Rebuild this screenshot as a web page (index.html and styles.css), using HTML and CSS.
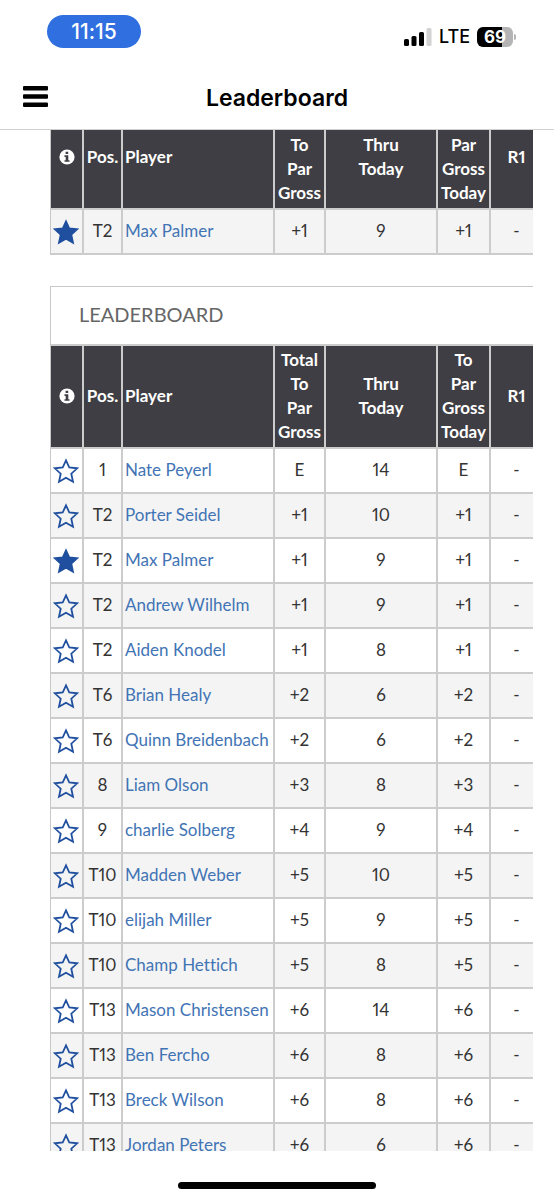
FILE: index.html
```html
<!DOCTYPE html>
<html lang="en">
<head>
	<meta charset="UTF-8">
	<meta name="viewport" content="width=device-width,initial-scale=1">
	<title>Leaderboard</title>
	<link rel="stylesheet" href="styles.css">
</head>
<body>
	<svg class="defs" width="0" height="0">
		<symbol id="star" viewBox="0 0 26 26">
			<path d="M13 2.300 16.300 9.500 24.200 10.300 18.300 15.700 20 23.700 13 19.700 6 23.700 7.700 15.700 1.800 10.300 9.700 9.500Z" stroke="#1f4f9e" stroke-width="1.8"/>
		</symbol>
		<symbol id="info" viewBox="0 0 16 16">
			<circle cx="8" cy="8" r="7.6" fill="#fff"/>
			<path d="M6.6 2.7h2.6v2.4H6.6zM5.5 6.3h3.8v4.9h1.2v1.6h-5v-1.6h1.2V7.9H5.500z" fill="#3f3e44"/>
		</symbol>
	</svg>
	<div class="status">
		<span class="time">11:15</span>
		<div class="signal">
			<svg width="28" height="18" viewBox="0 0 28 18">
				<rect x="0" y="11" width="5" height="7" rx="1.5"/>
				<rect x="7.500" y="8" width="5" height="10" rx="1.5"/>
				<rect x="15" y="4" width="5" height="14" rx="1.5"/>
				<rect x="22.500" y="0" width="5" height="18" rx="1.5" fill="#d2d2d2"/>
			</svg>
			<span class="network">LTE</span>
			<span class="battery">69</span>
		</div>
	</div>
	<header class="appbar">
		<button class="menu" aria-label="Menu">
			<svg width="25" height="21" viewBox="0 0 25 21">
				<rect width="25" height="4.500" rx="1"/>
				<rect y="8.200" width="25" height="4.500" rx="1"/>
				<rect y="16.400" width="25" height="4.500" rx="1"/>
			</svg>
		</button>
		<h1>Leaderboard</h1>
	</header>
	<main class="content">
		<table class="board favorites">
			<colgroup><col class="c-star"><col class="c-pos"><col><col class="c-total"><col class="c-thru"><col class="c-today"><col class="c-round"></colgroup>
			<thead>
				<tr><th><svg class="info"><use href="#info"/></svg></th><th>Pos.</th><th class="player">Player</th><th>Total<br>To<br>Par<br>Gross</th><th>Thru<br>Today</th><th>To<br>Par<br>Gross<br>Today</th><th>R1</th></tr>
			</thead>
			<tbody>
				<tr class="alt"><td><button class="star on" aria-label="Favorite"><svg><use href="#star"/></svg></button></td><td>T2</td><td class="player"><a href="#">Max Palmer</a></td><td>+1</td><td>9</td><td>+1</td><td>-</td></tr>
			</tbody>
		</table>

		<table class="board">
			<colgroup><col class="c-star"><col class="c-pos"><col><col class="c-total"><col class="c-thru"><col class="c-today"><col class="c-round"></colgroup>
			<thead>
				<tr><td class="heading" colspan="7">LEADERBOARD</td></tr>
				<tr><th><svg class="info"><use href="#info"/></svg></th><th>Pos.</th><th class="player">Player</th><th>Total<br>To<br>Par<br>Gross</th><th>Thru<br>Today</th><th>To<br>Par<br>Gross<br>Today</th><th>R1</th></tr>
			</thead>
			<tbody>
				<tr><td><button class="star" aria-label="Favorite"><svg><use href="#star"/></svg></button></td><td>1</td><td class="player"><a href="#">Nate Peyerl</a></td><td>E</td><td>14</td><td>E</td><td>-</td></tr>
				<tr class="alt"><td><button class="star" aria-label="Favorite"><svg><use href="#star"/></svg></button></td><td>T2</td><td class="player"><a href="#">Porter Seidel</a></td><td>+1</td><td>10</td><td>+1</td><td>-</td></tr>
				<tr><td><button class="star on" aria-label="Favorite"><svg><use href="#star"/></svg></button></td><td>T2</td><td class="player"><a href="#">Max Palmer</a></td><td>+1</td><td>9</td><td>+1</td><td>-</td></tr>
				<tr class="alt"><td><button class="star" aria-label="Favorite"><svg><use href="#star"/></svg></button></td><td>T2</td><td class="player"><a href="#">Andrew Wilhelm</a></td><td>+1</td><td>9</td><td>+1</td><td>-</td></tr>
				<tr><td><button class="star" aria-label="Favorite"><svg><use href="#star"/></svg></button></td><td>T2</td><td class="player"><a href="#">Aiden Knodel</a></td><td>+1</td><td>8</td><td>+1</td><td>-</td></tr>
				<tr class="alt"><td><button class="star" aria-label="Favorite"><svg><use href="#star"/></svg></button></td><td>T6</td><td class="player"><a href="#">Brian Healy</a></td><td>+2</td><td>6</td><td>+2</td><td>-</td></tr>
				<tr><td><button class="star" aria-label="Favorite"><svg><use href="#star"/></svg></button></td><td>T6</td><td class="player"><a href="#">Quinn Breidenbach</a></td><td>+2</td><td>6</td><td>+2</td><td>-</td></tr>
				<tr class="alt"><td><button class="star" aria-label="Favorite"><svg><use href="#star"/></svg></button></td><td>8</td><td class="player"><a href="#">Liam Olson</a></td><td>+3</td><td>8</td><td>+3</td><td>-</td></tr>
				<tr><td><button class="star" aria-label="Favorite"><svg><use href="#star"/></svg></button></td><td>9</td><td class="player"><a href="#">charlie Solberg</a></td><td>+4</td><td>9</td><td>+4</td><td>-</td></tr>
				<tr class="alt"><td><button class="star" aria-label="Favorite"><svg><use href="#star"/></svg></button></td><td>T10</td><td class="player"><a href="#">Madden Weber</a></td><td>+5</td><td>10</td><td>+5</td><td>-</td></tr>
				<tr><td><button class="star" aria-label="Favorite"><svg><use href="#star"/></svg></button></td><td>T10</td><td class="player"><a href="#">elijah Miller</a></td><td>+5</td><td>9</td><td>+5</td><td>-</td></tr>
				<tr class="alt"><td><button class="star" aria-label="Favorite"><svg><use href="#star"/></svg></button></td><td>T10</td><td class="player"><a href="#">Champ Hettich</a></td><td>+5</td><td>8</td><td>+5</td><td>-</td></tr>
				<tr><td><button class="star" aria-label="Favorite"><svg><use href="#star"/></svg></button></td><td>T13</td><td class="player"><a href="#">Mason Christensen</a></td><td>+6</td><td>14</td><td>+6</td><td>-</td></tr>
				<tr class="alt"><td><button class="star" aria-label="Favorite"><svg><use href="#star"/></svg></button></td><td>T13</td><td class="player"><a href="#">Ben Fercho</a></td><td>+6</td><td>8</td><td>+6</td><td>-</td></tr>
				<tr><td><button class="star" aria-label="Favorite"><svg><use href="#star"/></svg></button></td><td>T13</td><td class="player"><a href="#">Breck Wilson</a></td><td>+6</td><td>8</td><td>+6</td><td>-</td></tr>
				<tr class="alt"><td><button class="star" aria-label="Favorite"><svg><use href="#star"/></svg></button></td><td>T13</td><td class="player"><a href="#">Jordan Peters</a></td><td>+6</td><td>6</td><td>+6</td><td>-</td></tr>
			</tbody>
		</table>
	</main>
	<footer class="home"><div class="home-bar"></div></footer>
</body>
</html>
```

FILE: styles.css
```css
*{
	box-sizing: border-box;
}
body{
	margin: 0;
	height: 100vh;
	display: flex;
	flex-direction: column;
	overflow: hidden;
	background: #fff;
	color: #333;
	font-family: Lato, "Liberation Sans", sans-serif;
	font-variant-ligatures: none;
}
button{
	padding: 0;
	border: 0;
	background: none;
}
.defs{
	position: absolute;
}

/* status bar */
.status{
	display: flex;
	justify-content: space-between;
	align-items: flex-start;
	height: 67px;
	padding: 15px 41px 0 47px;
	font-family: Inter, sans-serif;
	color: #000;
}
.time{
	width: 94px;
	border-radius: 17px;
	background: #2f6fe0;
	color: #fff;
	font-size: 21px;
	font-weight: 500;
	line-height: 33px;
	text-align: center;
}
.signal{
	display: flex;
	align-items: center;
	gap: 7px;
	padding-top: 12px;
	line-height: 20px;
}
.network{
	font-size: 18px;
	font-weight: 500;
}
.battery{
	position: relative;
	width: 36px;
	border-radius: 6px;
	background: linear-gradient(to right, #000 70%, #b4b4b4 70%);
	color: #fff;
	font-size: 17px;
	font-weight: 700;
	text-align: center;
}
.battery::after{
	content: "";
	position: absolute;
	right: -3px;
	top: 7px;
	width: 2px;
	height: 6px;
	border-radius: 0 2px 2px 0;
	background: #b4b4b4;
}

/* title bar */
.appbar{
	display: grid;
	grid-template-columns: 25px 1fr 25px;
	align-items: center;
	flex: none;
	height: 63px;
	padding: 0 23px;
	border-bottom: 1px solid #d0d0d0;
	color: #000;
}
.menu{
	padding-bottom: 4px;
}
.menu svg{
	display: block;
}
.appbar h1{
	margin: 0;
	font-family: Inter, sans-serif;
	font-size: 23px;
	font-weight: 600;
	text-align: center;
}

/* tables */
.content{
	flex: 1;
	min-height: 0;
	margin: 0 21px 0 50px;
	overflow: hidden;
}
.board{
	width: 100%;
	min-width: 494px;
	table-layout: fixed;
	border-collapse: separate;
	border-spacing: 0;
	border-left: 1px solid #c8c8c8;
	border-top: 1px solid #c8c8c8;
	font-size: 17px;
	font-variant-numeric: proportional-nums;
	line-height: 24px;
}
.favorites{
	margin-top: -24px;
	margin-bottom: 31px;
}
.c-star{ width: 33px; }
.c-pos{ width: 39px; }
.c-total{ width: 51px; }
.c-thru{ width: 112px; }
.c-today{ width: 53px; }
.c-round{ width: 53px; }
.board th, .board td{
	padding: 0 0 2px;
	border-right: 2px solid #ccc;
	border-bottom: 2px solid #ccc;
	text-align: center;
	vertical-align: middle;
}
.board th{
	height: 103px;
	background: #3f3e44;
	color: #fff;
	font-weight: 700;
}
.board td{
	height: 45px;
}
.board .player{
	padding-left: 2px;
	text-align: left;
	white-space: nowrap;
}
.board .heading{
	height: 59px;
	padding-left: 28px;
	padding-bottom: 4px;
	color: #666;
	font-size: 20px;
	text-align: left;
}
.alt{
	background: #f4f4f4;
}
.player a{
	color: #4274b5;
	text-decoration: none;
}
.info{
	display: block;
	width: 16px;
	height: 16px;
	margin: 0 auto;
}
.star{
	display: block;
	margin: 3px auto 0 2px;
}
.star svg{
	display: block;
	width: 26px;
	height: 26px;
	fill: none;
}
.star.on svg{
	fill: #1f4f9e;
}

/* home indicator */
.home{
	flex: none;
	height: 49px;
	padding-top: 31px;
}
.home-bar{
	width: 198px;
	height: 7px;
	margin: 0 auto;
	border-radius: 4px;
	background: #000;
}
```
